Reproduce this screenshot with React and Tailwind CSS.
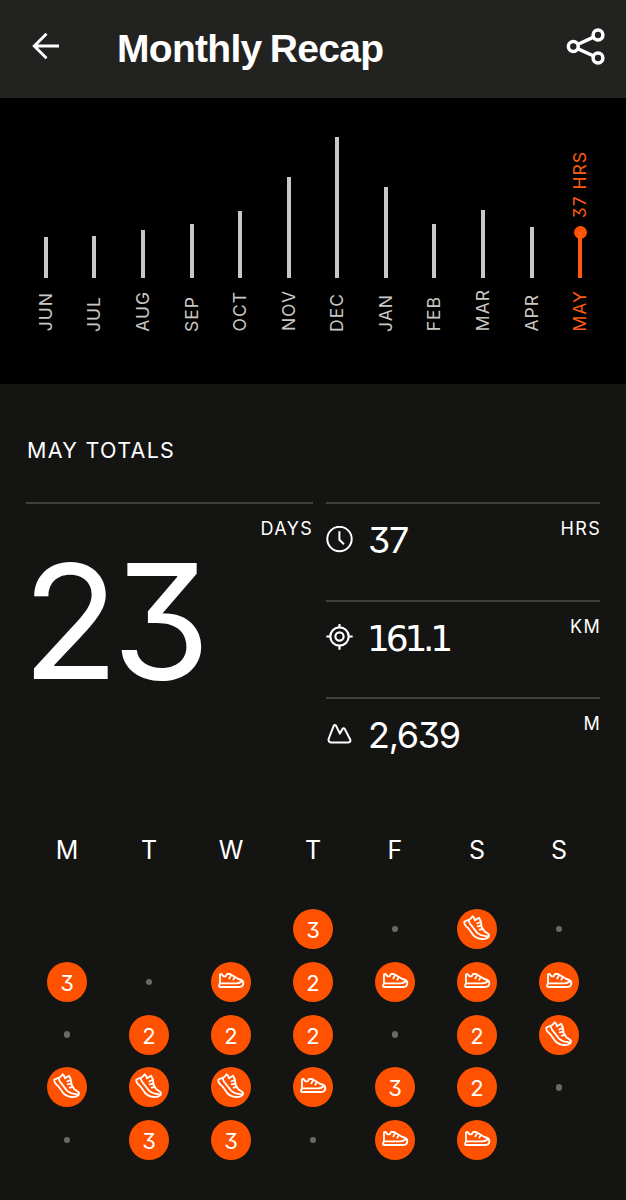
import React from "react";

const months = [
  ["JUN", 41], ["JUL", 41.5], ["AUG", 48], ["SEP", 53.5], ["OCT", 66.5], ["NOV", 100.5],
  ["DEC", 140.5], ["JAN", 91], ["FEB", 53.5], ["MAR", 67.5], ["APR", 51], ["MAY", 46],
];

const weeks = [
  ["", "", "", "3", ".", "run", "."],
  ["3", ".", "shoe", "2", "shoe", "shoe", "shoe"],
  [".", "2", "2", "2", ".", "2", "run"],
  ["run", "run", "run", "shoe", "3", "2", "."],
  [".", "3", "3", ".", "shoe", "shoe", ""],
];

function BackIcon() {
  return (
    <svg className="h-[28px] w-[28px]" viewBox="0 0 28 28" fill="none" stroke="#fff" strokeWidth="2.9">
      <path d="M27 14H3M14.5 1.8L2.3 14l12.2 12.2" />
    </svg>
  );
}

function ShareIcon() {
  return (
    <svg className="h-[38px] w-[40px]" viewBox="0 0 40 38" fill="none" stroke="#fff" strokeWidth="3.5">
      <circle cx="7.3" cy="18.5" r="4.9" />
      <circle cx="32" cy="7" r="4.9" />
      <circle cx="32" cy="30" r="4.9" />
      <path d="M11.500 16.5L27.600 9.200M11.500 20.600l16.200 7.400" />
    </svg>
  );
}

function ClockIcon() {
  return (
    <svg className="h-[28px] w-[28px]" viewBox="0 0 28 28" fill="none" stroke="#fff" strokeWidth="2">
      <circle cx="14.500" cy="13" r="12.2" />
      <path d="M14.400 5.200v8.6l4.6 4.4" />
    </svg>
  );
}

function TargetIcon() {
  return (
    <svg className="h-[28px] w-[28px]" viewBox="0 0 28 28" fill="none" stroke="#fff" strokeWidth="2.200">
      <circle cx="14.500" cy="12.500" r="9.2" />
      <circle cx="14.500" cy="12.500" r="4.1" />
      <path d="M14.500 -.5v4M14.500 21.700v4M1.300 12.500h4M23.700 12.500h4" />
    </svg>
  );
}

function MountainIcon() {
  return (
    <svg className="h-[28px] w-[28px]" viewBox="0 0 28 28" fill="none" stroke="#fff" strokeWidth="2" strokeLinejoin="round">
      <path d="M3.600 18L8.700 4.900Q9.900 3 11.100 4.900L14.900 12.600L17.500 7.900Q18.600 6.400 19.700 7.900L25.300 18.700Q26 21.300 23.300 21.500H6Q3.100 21.300 3.600 18Z" />
    </svg>
  );
}

function ShoeIcon() {
  return (
    <svg className="h-[40px] w-[40px]" viewBox="0 0 120 120" fill="none" stroke="#fff" strokeWidth="5.500" strokeLinejoin="round" strokeLinecap="round">
      <path d="M27 65V37L32 36L37 43H44L48 36H57L82 51Q97 54 97 63Q97 75 84 75H28Q24 75 24 71L27 64H76Q86 64 93 57" />
      <path d="M55 49L60 40M67 53L71 46" />
    </svg>
  );
}

function RunShoeIcon() {
  return (
    <svg className="h-[40px] w-[40px]" viewBox="0 0 120 120" fill="none" stroke="#fff" strokeWidth="5.500" strokeLinejoin="round" strokeLinecap="round">
      <path d="M22 38L33 33L40 30L47 22L51 26L54 34L66 26L71 36L74 54L82 67L94 75Q98 79 94 85Q86 91 75 90Q57 89 47 76L34 58Q20 47 22 38Z" />
      <path d="M35 34Q37 45 47 54L60 71Q70 81 92 82" />
      <path d="M71 39L61 43M73 50L62 52M77 60L68 62" />
    </svg>
  );
}

function Day({ value }) {
  if (value === "") return <div className="h-10" />;
  if (value === ".")
    return (
      <div className="flex h-10 items-center justify-center">
        <div className="h-[6.500px] w-[6.500px] rounded-full bg-[#696968]" />
      </div>
    );
  return (
    <div className="flex justify-center">
      <div className="flex h-10 w-10 items-center justify-center rounded-full bg-[#fe5200] text-[22px] leading-none">
        {value === "shoe" ? <ShoeIcon /> : value === "run" ? <RunShoeIcon /> : <span className="pt-[2px]">{value}</span>}
      </div>
    </div>
  );
}

function Stat({ icon, value, unit, slab }) {
  return (
    <div className="flex h-[97.500px] items-start border-t-2 border-[#40403f]">
      <div className="mt-[22px] -ml-px">{icon}</div>
      <div
        className={
          slab
            ? "ml-[14px] mt-[17px] font-['DejaVu_Sans',sans-serif] text-[36px] leading-[40px] tracking-[-4.200px]"
            : "ml-[15px] mt-[16px] text-[36px] leading-[40px] tracking-[-1.300px]"
        }
      >
        {value}
      </div>
      <div className="ml-auto -mr-px mt-[13px] text-[18px] leading-6 tracking-[1.300px]">{unit}</div>
    </div>
  );
}

export default function App() {
  return (
    <div className="h-[1200px] w-[626px] overflow-hidden bg-[#141412] font-['Inter',sans-serif] text-white [font-feature-settings:'cv09']">
      <header className="flex h-[98px] items-center bg-[#222220] pr-[20px] pl-[32px]">
        <div className="-mt-[6px]"><BackIcon /></div>
        <h1 className="ml-[57px] -mt-px font-['Liberation_Sans',sans-serif] text-[39px] leading-none font-bold tracking-[-0.700px] [word-spacing:-2px]">Monthly Recap</h1>
        <div className="-mt-[5px] ml-auto"><ShareIcon /></div>
      </header>

      <section className="grid h-[286px] grid-cols-12 bg-black pr-[21.500px] pl-[21.500px] text-[17.500px] leading-5 tracking-[1px] text-[#c9c8c4]">
        {months.map(([name, height]) => {
          const current = name === "MAY";
          return (
            <div key={name} className={current ? "flex flex-col items-center text-[#fe5a14]" : "flex flex-col items-center"}>
              <div className="flex h-[179.500px] flex-col items-center justify-end">
                {current && <span className="mb-[7px] rotate-180 whitespace-nowrap [writing-mode:vertical-rl]">37 HRS</span>}
                {current && <span className="-mb-[7px] h-[13px] w-[13px] shrink-0 rounded-full bg-[#fe5200]" />}
                <div className={current ? "w-1 shrink-0 bg-[#fe5a14]" : "w-1 shrink-0 bg-[#c9c8c4]"} style={{ height }} />
              </div>
              <div className="flex h-[54px] items-end">
                <span className="rotate-180 [writing-mode:vertical-rl]">{name}</span>
              </div>
            </div>
          );
        })}
      </section>

      <h2 className="mt-[52px] ml-[27px] text-[21.500px] leading-7 tracking-[1.300px]">MAY TOTALS</h2>

      <section className="mt-[38px] grid grid-cols-[287px_274px] gap-x-[13px] pl-[26px]">
        <div className="border-t-2 border-[#40403f]">
          <div className="mt-[13px] text-right text-[18px] leading-6 tracking-[1.300px]">DAYS</div>
          <div className="-ml-[4px] text-[159px] leading-[160px] tracking-[-7px]">23</div>
        </div>
        <div>
          <Stat icon={<ClockIcon />} value="37" unit="HRS" />
          <Stat icon={<TargetIcon />} value="161.1" unit="KM" slab />
          <Stat icon={<MountainIcon />} value="2,639" unit="M" />
        </div>
      </section>

      <section className="mt-[39px] px-[26px]">
        <div className="grid grid-cols-7 text-center text-[25px] leading-8">
          {["M", "T", "W", "T", "F", "S", "S"].map((d, i) => <div key={i}>{d}</div>)}
        </div>
        <div className="mt-[43.500px] grid grid-cols-7 gap-y-[12.800px]">
          {weeks.flat().map((v, i) => <Day key={i} value={v} />)}
        </div>
      </section>
    </div>
  );
}
